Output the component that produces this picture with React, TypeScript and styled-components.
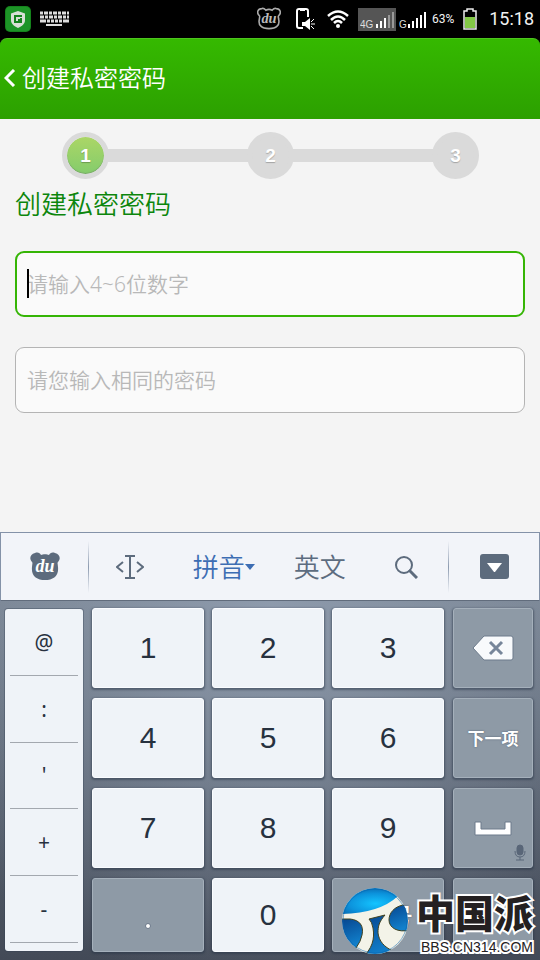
import React from 'react';
import styled, { createGlobalStyle, css } from 'styled-components';

const GlobalStyle = createGlobalStyle`
  * { box-sizing: border-box; }
  body { margin: 0; background: #000; font-family: "Noto Sans", "Noto Sans CJK SC", sans-serif; }
  button, input { font: inherit; }
  svg { display: block; flex: none; }
`;

const Screen = styled.div`
  min-height: 100vh;
  display: flex;
  flex-direction: column;
  position: relative;
  overflow: hidden;
`;

const StatusBar = styled.div`
  height: 38px;
  padding: 0 6px 0 5px;
  display: flex;
  align-items: center;
  justify-content: space-between;
  color: #f2f2f2;
  font-family: Roboto, sans-serif;
`;

const StatusGroup = styled.div<{ $gap: number }>`
  display: flex;
  align-items: center;
  gap: ${(p) => p.$gap}px;
`;

const SignalBox = styled.span<{ $filled?: boolean }>`
  display: flex;
  align-items: center;
  justify-content: center;
  width: ${(p) => (p.$filled ? 38 : 28)}px;
  height: 23px;
  background: ${(p) => (p.$filled ? '#555' : 'transparent')};
`;

const Percent = styled.span`
  font-size: 12px;
  font-weight: 400;
`;

const Clock = styled.time`
  font-size: 18px;
  line-height: 24px;
`;

const Header = styled.header`
  height: 81px;
  padding: 0 4px 2px;
  display: flex;
  align-items: center;
  gap: 6px;
  color: #fff;
  border-top: 1px solid #4cc41e;
  border-radius: 7px 7px 0 0;
  background: linear-gradient(#35b900, #2ca000);
`;

const BackButton = styled.button`
  display: flex;
  padding: 0;
  border: 0;
  background: none;
  color: inherit;
`;

const HeaderTitle = styled.h1`
  margin: 0;
  font-size: 24px;
  line-height: 32px;
  font-weight: 350;
`;

const Content = styled.main`
  flex: 1;
  padding: 13px 15px 0;
  background: #f4f4f4;
`;

const Steps = styled.ol`
  list-style: none;
  margin: 0;
  padding: 0 46px 0 47px;
  display: flex;
  align-items: center;
`;

const Step = styled.li<{ $active?: boolean }>`
  width: 47px;
  height: 47px;
  flex: none;
  display: flex;
  align-items: center;
  justify-content: center;
  border-radius: 50%;
  border: 5px solid #dadada;
  background: ${(p) => (p.$active ? 'linear-gradient(#abd666, #84cc6c)' : '#dadada')};
  background-clip: ${(p) => (p.$active ? 'padding-box' : 'border-box')};
  box-shadow: ${(p) => (p.$active ? 'inset 0 -1px 1px #79a868' : 'none')};
  color: #fff;
  font: bold 19px/24px "Liberation Sans", sans-serif;
  text-shadow: 0 1px 1px rgba(0, 0, 0, 0.25);
`;

const StepLine = styled.li`
  flex: 1;
  height: 13px;
  margin: 0 -2px;
  background: #dadada;
`;

const Title = styled.h2`
  margin: 7px 0 29px;
  color: #0c860c;
  font-size: 26px;
  line-height: 36px;
  font-weight: 350;
`;

const Field = styled.input<{ $focused?: boolean }>`
  display: block;
  width: 100%;
  height: 66px;
  margin-bottom: 30px;
  padding: 0 ${(p) => (p.$focused ? 10 : 11)}px;
  border: ${(p) => (p.$focused ? '2px solid #35b505' : '1px solid #b4b4b4')};
  border-radius: 9px;
  outline: 0;
  background: #fafafa;
  font-size: 21px;
  font-weight: 350;
  &::placeholder { color: #b8b8b8; opacity: 1; }
`;

const FieldBox = styled.div`
  position: relative;
`;

const Caret = styled.span`
  position: absolute;
  left: 12px;
  top: 18px;
  width: 2px;
  height: 29px;
  background: #000;
`;

const Toolbar = styled.div`
  height: 69px;
  display: grid;
  grid-template-columns: 88fr 82fr 107fr 86fr 87fr 90fr;
  border: 1px solid #8492a8;
  border-bottom-color: #616c7c;
  background: #f2f4f9;
`;

const Tool = styled.button<{ $active?: boolean; $divider?: boolean }>`
  display: flex;
  align-items: center;
  justify-content: center;
  padding: 0;
  border: 0;
  background: none;
  color: ${(p) => (p.$active ? '#3d6db3' : '#5d6c80')};
  font-size: 26px;
  font-weight: 350;
  line-height: 36px;
  ${(p) =>
    p.$divider &&
    css`
      background: linear-gradient(transparent, #8d9bb0, transparent) right center / 1px 52px no-repeat;
    `}
`;

const Keypad = styled.div`
  padding: 7px 7px 8px 5px;
  display: grid;
  grid-template-columns: 78fr 352fr 80fr;
  gap: 9px;
  background: radial-gradient(ellipse 75% 110% at 50% 0, rgba(144, 157, 175, 0.9), transparent),
    linear-gradient(#76818f, #565f6d 55%, #434a57);
`;

const SideKeys = styled.div`
  min-width: 0;
  margin: 1px 0;
  padding: 0 5px 8px;
  display: flex;
  flex-direction: column;
  border-radius: 3px;
  background: #eff3f8;
  box-shadow: 0 0 0 1px rgba(50, 62, 80, 0.35);
`;

const SideKey = styled.button`
  flex: 1;
  padding: 0;
  border: 0;
  border-bottom: 1px solid #a3a8af;
  background: none;
  color: #27313f;
  font: 400 21px/28px "Noto Sans", sans-serif;
`;

const Keys = styled.div<{ $columns: number }>`
  min-width: 0;
  display: grid;
  grid-template-columns: repeat(${(p) => p.$columns}, minmax(0, 1fr));
  grid-template-rows: 80px 80px 80px 74px;
  gap: 10px 8px;
`;

const Key = styled.button<{ $dark?: boolean; $large?: boolean }>`
  display: flex;
  align-items: center;
  justify-content: center;
  position: relative;
  padding: 0;
  border: 1px solid ${(p) => (p.$dark ? '#a5b0bb' : '#fafcff')};
  border-radius: 3px;
  background: ${(p) => (p.$dark ? '#8e9aa6' : '#eff3f8')};
  box-shadow: 0 1px 2px 1px rgba(40, 52, 70, 0.5);
  color: ${(p) => (p.$dark ? '#fff' : '#27313f')};
  font: ${(p) =>
    p.$dark
      ? `${p.$large ? '500 25px' : 'bold 17px'}/24px "Noto Sans CJK SC", sans-serif`
      : '30px/36px "Liberation Sans", sans-serif'};
  text-shadow: ${(p) => (p.$dark ? '0 0 2px #4f5d70' : 'none')};
`;

const MicBadge = styled.span`
  position: absolute;
  right: 6px;
  bottom: 6px;
`;

const Watermark = styled.div`
  position: absolute;
  right: 7px;
  bottom: 5px;
  display: flex;
  align-items: flex-end;
  gap: 7px;
`;

const WatermarkText = styled.div`
  display: flex;
  flex-direction: column;
  align-items: flex-end;
  color: #242021;
  -webkit-text-stroke: 4px #fff;
  paint-order: stroke fill;
`;

const Brand = styled.span`
  font: 900 39px/56px "Noto Sans CJK SC", sans-serif;
`;

const Site = styled.span`
  font: 14px/16px "Liberation Sans", sans-serif;
`;

const Bear = ({ size, outline }: { size: number; outline?: boolean }) => (
  <svg width={size} height={size} viewBox="0 0 30 30" aria-hidden="true">
    <path
      d={
        outline
          ? 'M6 2C9 1 10 3 11 4C13 3 17 3 19 4C20 3 21 1 24 2C29 2 31 7 27 11C26 12 27 13 27 15C29 23 24 27 15 27C6 27 1 23 3 15C3 13 4 12 3 11C-1 7 1 2 6 2Z'
          : 'M5 1C8 0 10 1 11 3C13 2 17 2 19 3C20 1 22 0 25 1C30 2 31 7 28 10C27 11 28 13 28 15C29 24 23 28 15 28C7 28 1 24 2 15C2 13 3 11 2 10C-1 7 0 2 5 1Z'
      }
      fill={outline ? 'none' : '#5d6b7d'}
      stroke={outline ? '#aaa' : 'none'}
      strokeWidth="2"
    />
    <text
      x="15"
      y="20"
      textAnchor="middle"
      fontFamily="Liberation Serif, serif"
      fontStyle="italic"
      fontWeight="bold"
      fontSize="18"
      fill={outline ? '#bbb' : '#fff'}
    >
      du
    </text>
  </svg>
);

const Shield = () => (
  <svg width="26" height="26" viewBox="0 0 26 26" aria-hidden="true">
    <rect width="26" height="26" rx="5" fill="#15841c" />
    <rect x="1" y="1" width="24" height="24" rx="4" fill="#1d9427" />
    <path d="M13 5L20 7.500V14C20 18 17 20 13 22C9 20 6 18 6 14V7.500Z" fill="#d9dfd6" />
    <path d="M17 10H10V16H16V14H13M16 12V14" fill="none" stroke="#16831e" strokeWidth="2" />
  </svg>
);

const KeyboardIcon = () => (
  <svg width="29" height="16" viewBox="0 0 29 16" aria-hidden="true" stroke="#ddd" strokeWidth="3">
    <path d="M0 2H29" strokeDasharray="3 1 4 1" />
    <path d="M0 6H29" strokeDasharray="4 1 3 1" />
    <path d="M0 10H29" strokeDasharray="6 1 3 1 3 1 3 1 3 1" />
    <path d="M6 14H22" strokeWidth="2" />
  </svg>
);

const PhoneMute = () => (
  <svg width="19" height="22" viewBox="0 0 19 22" aria-hidden="true">
    <path d="M12 9V3Q12 1 10 1H3Q1 1 1 3V18Q1 20 3 20H7" fill="none" stroke="#fff" strokeWidth="2" />
    <path d="M4 1H9V3H4ZM6 14H9L14 10V22L9 18H6Z" fill="#fff" />
    <path d="M15 14L18 11M15 16H19M15 18L18 21" stroke="#fff" fill="none" />
  </svg>
);

const Wifi = () => (
  <svg width="22" height="18" viewBox="0 0 22 18" aria-hidden="true" fill="none" stroke="#fff" strokeWidth="2.500">
    <path d="M1 6Q11-3 21 6M4 10Q11 3 18 10M7 13Q11 9 15 13" />
    <circle cx="11" cy="16" r="2" fill="#fff" stroke="none" />
  </svg>
);

const Signal = ({ label, weak }: { label: string; weak?: boolean }) => {
  const start = label.length > 1 ? 16 : 9;
  return (
    <svg width={start + 18} height="19" viewBox={`0 0 ${start + 18} 19`} aria-hidden="true">
      <text x="0" y="18" fontFamily="Liberation Sans, sans-serif" fontSize="10" fill="#ddd">
        {label}
      </text>
      {[0, 1, 2, 3, 4].map((i) => (
        <rect
          key={i}
          x={start + i * 4}
          y={14 - i * 3}
          width="2"
          height={4 + i * 3}
          fill={weak && i > 2 ? '#999' : '#fff'}
        />
      ))}
    </svg>
  );
};

const Battery = () => (
  <svg width="14" height="22" viewBox="0 0 14 22" aria-hidden="true">
    <path d="M4 3V1H10V3H13V21H1V3Z" fill="none" stroke="#eee" strokeWidth="1.500" />
    <rect x="2" y="9" width="10" height="11" fill="#83c846" />
  </svg>
);

const GlobeLogo = () => (
  <svg width="67" height="67" viewBox="0 0 67 67" aria-hidden="true">
    <defs>
      <radialGradient id="sky" cx="50%" cy="60%" r="65%">
        <stop offset="0" stopColor="#14c4ff" />
        <stop offset="0.6" stopColor="#0c93dc" />
        <stop offset="1" stopColor="#0868b0" />
      </radialGradient>
      <linearGradient id="sea" x1="0" y1="0" x2="0.3" y2="1">
        <stop offset="0" stopColor="#07468f" />
        <stop offset="1" stopColor="#1180cc" />
      </linearGradient>
      <clipPath id="disc">
        <circle cx="33" cy="33" r="33" />
      </clipPath>
    </defs>
    <g clipPath="url(#disc)">
      <rect width="67" height="67" fill="#f3f3e8" />
      <path d="M0 0H67L56 8Q38 25 0 26Z" fill="url(#sky)" />
      <g fill="url(#sea)" stroke="#41421f">
        <path d="M-1 31H8C18 32 22 38 20 47Q19 53 14 60L-1 60Z" />
        <path d="M27 31L43 27C37 34 36 38 36 45C37 53 42 59 51 63L40 70H20C30 61 33 51 31 40Q30 34 27 31Z" />
        <path d="M68 17H61C52 19 47 25 47 32C47 40 56 45 68 42Z" />
      </g>
    </g>
    <circle cx="33" cy="33" r="32" fill="none" stroke="#0a62ac" strokeOpacity="0.5" />
  </svg>
);

export default function App() {
  return (
    <>
      <GlobalStyle />
      <Screen>
        <StatusBar>
          <StatusGroup $gap={9}>
            <Shield />
            <KeyboardIcon />
          </StatusGroup>
          <StatusGroup $gap={12}>
            <StatusGroup $gap={15}>
              <Bear size={24} outline />
              <PhoneMute />
            </StatusGroup>
            <StatusGroup $gap={9}>
              <Wifi />
              <StatusGroup $gap={5}>
                <StatusGroup $gap={3}>
                  <SignalBox $filled>
                    <Signal label="4G" weak />
                  </SignalBox>
                  <SignalBox>
                    <Signal label="G" />
                  </SignalBox>
                </StatusGroup>
                <StatusGroup $gap={9}>
                  <Percent>63%</Percent>
                  <Battery />
                </StatusGroup>
              </StatusGroup>
            </StatusGroup>
            <Clock>15:18</Clock>
          </StatusGroup>
        </StatusBar>

        <Header>
          <BackButton aria-label="返回">
            <svg width="12" height="18" viewBox="0 0 12 18" fill="none" stroke="#fff" strokeWidth="3">
              <path d="M10 1L2 9L10 17" />
            </svg>
          </BackButton>
          <HeaderTitle>创建私密密码</HeaderTitle>
        </Header>

        <Content>
          <Steps>
            <Step $active>1</Step>
            <StepLine aria-hidden="true" />
            <Step>2</Step>
            <StepLine aria-hidden="true" />
            <Step>3</Step>
          </Steps>
          <Title>创建私密密码</Title>
          <FieldBox>
            <Field $focused aria-label="密码" placeholder="请输入4~6位数字" inputMode="numeric" />
            <Caret />
          </FieldBox>
          <Field aria-label="确认密码" placeholder="请您输入相同的密码" inputMode="numeric" />
        </Content>

        <Toolbar>
          <Tool $divider aria-label="du">
            <Bear size={30} />
          </Tool>
          <Tool aria-label="光标">
            <svg width="28" height="24" viewBox="0 0 28 24" fill="none" stroke="#5d6b7d" strokeWidth="2">
              <path d="M7 7L1 12L7 17M21 7L27 12L21 17M9 1H19M9 23H19M14 1V23" />
            </svg>
          </Tool>
          <Tool $active>
            拼音
            <svg width="10" height="6" viewBox="0 0 10 6" fill="#3d6db3">
              <path d="M0 0H10L5 6Z" />
            </svg>
          </Tool>
          <Tool>英文</Tool>
          <Tool $divider aria-label="搜索">
            <svg width="24" height="24" viewBox="0 0 24 24" fill="none" stroke="#5d6b7d" strokeWidth="2">
              <circle cx="10" cy="10" r="8" />
              <path d="M15 15L23 23" strokeWidth="3" />
            </svg>
          </Tool>
          <Tool aria-label="收起键盘">
            <svg width="29" height="25" viewBox="0 0 29 25">
              <rect width="29" height="25" rx="3" fill="#5d6b7d" />
              <path d="M7 9H22L15 18H14Z" fill="#fff" />
            </svg>
          </Tool>
        </Toolbar>

        <Keypad>
          <SideKeys>
            {['@', ':', "'", '+', '-'].map((k) => (
              <SideKey key={k}>{k}</SideKey>
            ))}
          </SideKeys>
          <Keys $columns={3}>
            {['1', '2', '3', '4', '5', '6', '7', '8', '9'].map((k) => (
              <Key key={k}>{k}</Key>
            ))}
            <Key $dark aria-label=".">
              <svg width="8" height="36" viewBox="0 0 8 36">
                <circle cx="4" cy="29" r="2.500" fill="#fff" stroke="#6a7788" />
              </svg>
            </Key>
            <Key>0</Key>
            <Key $dark $large>
              符号
            </Key>
          </Keys>
          <Keys $columns={1}>
            <Key $dark aria-label="删除">
              <svg width="42" height="26" viewBox="0 0 42 26">
                <path d="M1 13L12 1H39Q41 1 41 3V23Q41 25 39 25H12Z" fill="#f8fafc" stroke="#6c7a8b" />
                <path d="M18 7L30 19M30 7L18 19" stroke="#77869a" strokeWidth="3" />
              </svg>
            </Key>
            <Key $dark>下一项</Key>
            <Key $dark aria-label="空格">
              <svg width="38" height="15" viewBox="0 0 38 15">
                <path d="M1 1H7V8H31V1H37V14H1Z" fill="#fff" stroke="#6c7a8b" />
              </svg>
              <MicBadge>
                <svg width="12" height="17" viewBox="0 0 12 17" fill="none" stroke="#596678">
                  <rect x="3" y="1" width="6" height="10" rx="3" fill="#596678" />
                  <path d="M1 7Q1 13 6 13Q11 13 11 7M6 13V16M2 16H10" />
                </svg>
              </MicBadge>
            </Key>
            <Key $dark aria-label="回车" />
          </Keys>
        </Keypad>

        <Watermark>
          <GlobeLogo />
          <WatermarkText>
            <Brand>中国派</Brand>
            <Site>BBS.CN314.COM</Site>
          </WatermarkText>
        </Watermark>
      </Screen>
    </>
  );
}
